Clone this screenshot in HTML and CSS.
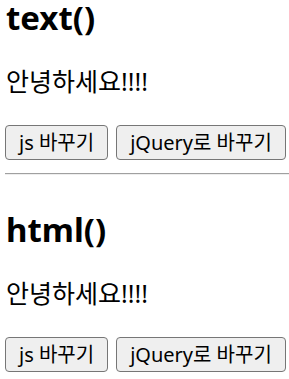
FILE: index.html
```html
<!DOCTYPE html>
<html lang="ko">
<head>
<meta charset="utf-8">
<title>text() / html()</title>
<link rel="stylesheet" href="styles.css">
</head>
<body>
  <section class="block">
    <h1 class="title">text()</h1>
    <p class="msg">안녕하세요!!!!</p>
    <div class="actions">
      <button class="btn" type="button">js 바꾸기</button>
      <button class="btn" type="button">jQuery로 바꾸기</button>
    </div>
    <hr class="rule">
  </section>
  <section class="block">
    <h1 class="title">html()</h1>
    <p class="msg">안녕하세요!!!!</p>
    <div class="actions">
      <button class="btn" type="button">js 바꾸기</button>
      <button class="btn" type="button">jQuery로 바꾸기</button>
    </div>
  </section>
</body>
</html>
```
FILE: styles.css
```css
html, body {
  margin: 0;
  background: #ffffff;
}
body {
  padding: 1px 0 0 5px;
  color: #000000;
  font-family: "Noto Sans", "Noto Sans CJK KR", sans-serif;
  overflow: hidden;
}
.title {
  margin: -5px 0 0;
  font-size: 33px;
  line-height: 44px;
  font-weight: 700;
  padding-left: 1px;
}
.msg {
  margin: 26px 0 0;
  font-size: 25px;
  line-height: 30px;
  padding-left: 1px;
}
.actions {
  display: flex;
  gap: 8px;
  margin-top: 29px;
}
.btn {
  box-sizing: border-box;
  height: 35px;
  padding: 0 13px;
  font-family: "Noto Sans", "Noto Sans CJK KR", sans-serif;
  font-size: 20px;
  line-height: 1;
  color: #000000;
  background: #efefef;
  border: 1px solid #767676;
  border-radius: 4px;
}
.rule {
  margin: 13px 0 38px;
  border: 0;
  border-top: 1px solid #a0a0a0;
  border-bottom: 1px solid #eeeeee;
  height: 0;
}
```
